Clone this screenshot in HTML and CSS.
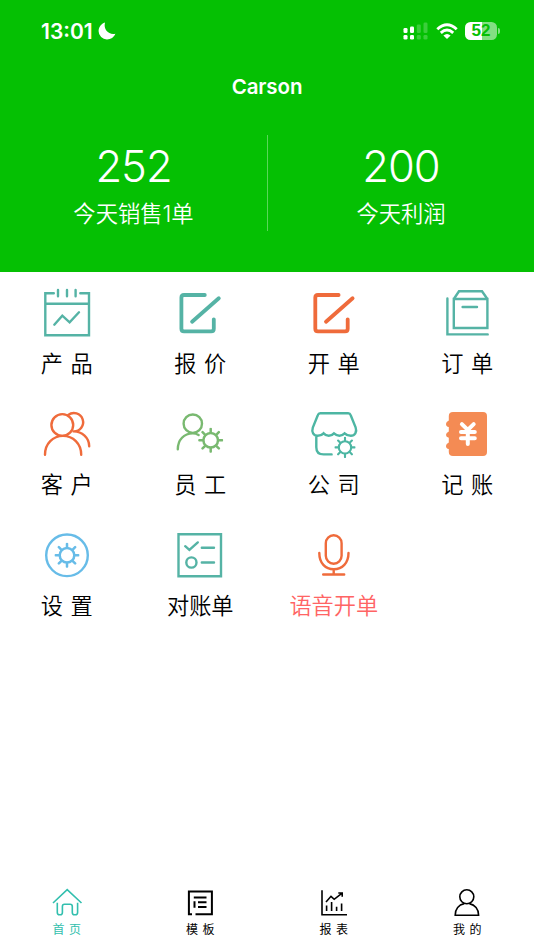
FILE: index.html
```html
<!DOCTYPE html>
<html lang="zh-CN">
<head>
<meta charset="utf-8">
<meta name="viewport" content="width=device-width, initial-scale=1">
<title>Carson</title>
<link rel="stylesheet" href="styles.css">
</head>
<body>
<svg width="0" height="0" class="defs" aria-hidden="true">
  <symbol id="gear" viewBox="-12 -12 24 24">
    <circle r="7"/>
    <path d="M0-7.5V-11M0 7.5V11M-7.5 0H-11M7.5 0H11M-5.3-5.3-7.8-7.8M5.3-5.3 7.8-7.8M-5.3 5.3-7.8 7.8M5.3 5.3 7.8 7.8"/>
  </symbol>
</svg>
<div class="app">
  <header class="header">
    <div class="status">
      <div class="clock"><span>13:01</span>
        <svg class="moon" viewBox="0 0 18 18"><path d="M7 .6C3.2 1.8.6 5.2.6 9.2A8.3 8.3 0 0 0 9 17.4C12.8 17.4 16 15.2 17.4 11.7C11.6 13.4 5 8.2 7 .6Z"/></svg>
      </div>
      <div class="signals">
        <svg class="cell" viewBox="0 0 26 18"><g><rect x=".5" y="6" width="4" height="5" rx="1.3"/><rect x="7" y="4.5" width="4" height="6.5" rx="1.3"/><rect x=".5" y="13" width="4" height="4.5" rx="1.3"/><rect x="7" y="13" width="4" height="4.5" rx="1.3"/></g><g opacity=".22"><rect x="13.8" y="2.5" width="4" height="8.5" rx="1.3"/><rect x="20.5" y=".5" width="4" height="10.5" rx="1.3"/><rect x="13.8" y="13" width="4" height="4.5" rx="1.3"/><rect x="20.5" y="13" width="4" height="4.5" rx="1.3"/></g></svg>
        <svg class="wifi" viewBox="0 0 22 17"><g fill="none" stroke="#fff" stroke-width="2.9"><path d="M1.3 6.2Q11-2.9 20.7 6.2"/><path d="M4.8 9.9Q11 4.2 17.2 9.9"/></g><path d="M7.4 12.6Q11 9.6 14.6 12.6L11 16Z"/></svg>
        <div class="battery"><span>52</span></div><i class="nub"></i>
      </div>
    </div>
    <h1>Carson</h1>
    <div class="stats">
      <div class="stat"><strong>252</strong><span>今天销售<span class="count">1</span>单</span></div>
      <div class="stat"><strong>200</strong><span>今天利润</span></div>
    </div>
  </header>

  <main class="menu">
    <a class="item"><svg class="teal" viewBox="0 0 60 60"><path d="M16.8 10.3H8.3V52.3H52V10.3H43.3M8.3 20.7H52M21 7V13.3M30 7V13.3M38.6 7V13.3"/><path d="M17.3 41.7 25.3 32.7 32.6 39.3 42 29.3"/></svg><span>产 品</span></a>
    <a class="item"><svg class="teal thick" viewBox="0 0 60 60"><path d="M34.8 12H14Q11.4 12 11.4 14.6V45.8Q11.4 48.4 14 48.4H41.2Q43.8 48.4 43.8 45.8V36.3M22.1 38.7 48.8 15.3"/></svg><span>报 价</span></a>
    <a class="item"><svg class="orange thick" viewBox="0 0 60 60"><path d="M34.6 12H13.9Q11.3 12 11.3 14.6V45.8Q11.3 48.4 13.9 48.4H41.1Q43.7 48.4 43.7 45.8V36.3M22 38.7 48.6 15.3"/></svg><span>开 单</span></a>
    <a class="item"><svg class="teal" viewBox="0 0 60 60"><path d="M10.4 15.5V51.4H50.7M16.8 16H50.4V45H16.8ZL22 8.3H45L50.4 16M25.6 24H40"/></svg><span>订 单</span></a>

    <a class="item"><svg class="orange" viewBox="0 0 60 60"><circle cx="25.3" cy="21" r="10.9"/><path d="M8 50.7C8 39.5 16 31.9 26 31.9S44.2 39.5 44.2 50.7M31.2 11A9.2 9.2 0 1 1 36.6 27.4M36.6 27.4C45 27.4 52.2 33.8 52.2 42.3"/></svg><span>客 户</span></a>
    <a class="item"><svg class="green" viewBox="0 0 60 60"><circle cx="22.8" cy="19.7" r="9.2"/><path d="M7.8 45.3C7.8 35.7 14 29.4 22.8 29.4Q26 29.4 28.6 31"/><use href="#gear" x="28.2" y="23.8" width="25" height="25"/></svg><span>员 工</span></a>
    <a class="item"><svg class="mint" viewBox="0 0 60 60"><path d="M16.3 9.3H44.2Q46 9.3 46.7 11.2L51.6 23.4C53.3 28 50.8 31.8 46.8 31.8Q43 31.8 40.6 29.4Q38.2 31.8 35.4 31.8T30 29.4Q27.8 31.8 24.8 31.8T19.6 29.4Q17.4 31.8 13.7 31.8C9.4 31.8 7.4 28 8.8 23.6L13.8 11.2Q14.5 9.3 16.3 9.3ZM12.3 32V43.2Q12.3 50.4 19.6 50.4H27.6"/><use href="#gear" x="30.4" y="32.8" width="21.2" height="21.2"/></svg><span>公 司</span></a>
    <a class="item"><svg class="ledger" viewBox="0 0 60 60"><path class="cover" d="M16 8H46Q50 8 50 12V48Q50 52 46 52H16Q11.8 52 11.8 48V45Q9 44.5 9 42T11.8 38.5V33.8Q9 33.3 9 31T11.8 27.5V23Q9 22.5 9 20T11.8 16.5V12Q11.8 8 16 8Z"/><path d="M24.9 20.1 30.8 26 36.7 20.1M30.8 26V40M24 27.9H37.8M24 34.3H37.8"/></svg><span>记 账</span></a>

    <a class="item"><svg class="blue" viewBox="0 0 60 60"><circle cx="30" cy="30.3" r="20.8"/><use href="#gear" x="17.5" y="17.8" width="25" height="25"/></svg><span>设 置</span></a>
    <a class="item"><svg class="teal" viewBox="0 0 60 60"><path d="M8.5 9.3H51V51.3H8.5ZM15.2 21.2 19.4 24.8 27.8 17.4M31.8 22.7H44M31.8 37.5H44"/><circle cx="21.4" cy="37.5" r="5.1"/></svg><span>对账单</span></a>
    <a class="item voice"><svg class="orange" viewBox="0 0 60 60"><rect x="21.8" y="10.3" width="15.8" height="28.4" rx="7.9"/><path d="M15.3 28C15.3 38 21.3 44.3 29.8 44.3S44.5 38 44.5 28M29.7 44.3V49.5M19.2 49.5H40.2"/></svg><span>语音开单</span></a>
  </main>

  <nav class="tabs">
    <a class="tab active"><svg viewBox="0 0 32 32"><path d="M2 16 16.2 2.6 30.5 16M6.3 15.8V25.5Q6.3 27.8 8.6 27.8H9.2Q11.4 27.8 11.4 25.5V19.4Q11.4 17.3 13.5 17.3H19.1Q21.3 17.3 21.3 19.4V25.5Q21.3 27.8 23.5 27.8H24.3Q26.6 27.8 26.6 25.5V15.8"/></svg><span>首 页</span></a>
    <a class="tab"><svg class="bold" viewBox="0 0 32 32"><path d="M8 27.2H4.9V4.4H27.9V27.2H11.5M9.8 10.4H22.5M14 15.2H22.5M14 20H22.5M10.5 14.2V20.8"/></svg><span>模 板</span></a>
    <a class="tab"><svg viewBox="0 0 32 32"><path d="M4 3.3V27.7H29M8.6 18.5V24M13.6 15V24M18.6 19.7V24M23.6 16.5V24M8 15 13 9.3 16.2 12.3 23.8 6.3M20.3 6H24.2V9.8"/></svg><span>报 表</span></a>
    <a class="tab"><svg viewBox="0 0 32 32"><circle cx="15.8" cy="9.8" r="7"/><path d="M13.2 16.6C7.8 17.8 4.2 22.2 4.2 28.2H27.6C27.6 22.2 23.9 17.8 18.4 16.6"/></svg><span>我 的</span></a>
  </nav>
</div>
</body>
</html>
```

FILE: styles.css
```css
* { box-sizing: border-box; }
body {
  margin: 0;
  background: #fff;
  color: #000;
  font-family: Inter, "Noto Sans CJK SC", sans-serif;
}
.defs { position: absolute; }
.app { display: flex; flex-direction: column; height: 950px; }

.header { height: 272px; background: #05c003; color: #fff; }
.status {
  display: flex;
  justify-content: space-between;
  height: 60px;
  padding: 2px 34px 0 41px;
}
.clock { display: flex; align-items: center; gap: 5px; font-size: 21px; font-weight: 600; }
.moon { width: 18px; height: 18px; fill: #fff; }
.signals { display: flex; align-items: center; }
.cell { width: 26px; height: 18px; fill: #fff; }
.wifi { width: 22px; height: 17px; margin-left: 7px; fill: #fff; }
.battery {
  width: 32px;
  height: 18px;
  margin-left: 7px;
  border-radius: 5.5px;
  background: linear-gradient(90deg, #fff 52%, #83df82 52%);
  color: #05c003;
  font-family: "Liberation Sans", sans-serif;
  font-size: 17px;
  font-weight: 700;
  line-height: 18px;
  text-align: center;
}
.nub { width: 2px; height: 6px; margin-left: 1px; border-radius: 0 2px 2px 0; background: #83df82; }

h1 { margin: 0; font-size: 20.5px; font-weight: 600; line-height: 54px; letter-spacing: -0.1px; text-align: center; }
.stats { display: grid; grid-template-columns: 1fr 1fr; height: 95px; margin-top: 21px; }
.stat { display: flex; flex-direction: column; align-items: center; font-weight: 350; }
.stat + .stat { border-left: 1px solid #5ad759; }
.stat strong { font-size: 43.5px; font-weight: 340; line-height: 62px; letter-spacing: -1px; }
.stat > span { font-size: 22.3px; line-height: 34px; white-space: nowrap; }

.menu {
  display: grid;
  flex: 1;
  grid-template-columns: repeat(4, 1fr);
  grid-auto-rows: 121px;
}
.item {
  display: flex;
  flex-direction: column;
  align-items: center;
  padding-top: 11px;
  font-size: 22.2px;
  font-weight: 350;
  line-height: 34px;
  word-spacing: 1.5px;
  white-space: nowrap;
}
.item svg {
  width: 60px;
  height: 60px;
  margin-bottom: 4px;
  fill: none;
  stroke: currentColor;
  stroke-width: 2.4;
  stroke-linecap: round;
}
.item .thick { stroke-width: 3.8; }
.teal { color: #55b3a5; }
.mint { color: #4db6a3; }
.orange { color: #ef6b3b; }
.green { color: #79b970; }
.blue { color: #67bce8; }
.item .ledger { stroke: #fff; stroke-width: 4; }
.ledger .cover { fill: #f48b54; stroke: none; }
.voice { color: #ff6464; }

.tabs { display: grid; grid-template-columns: repeat(4, 1fr); height: 63px; }
.tab {
  display: flex;
  flex-direction: column;
  align-items: center;
  font-size: 12px;
  line-height: 21px;
  word-spacing: 1px;
}
.tab svg { width: 32px; height: 32px; fill: none; stroke: currentColor; stroke-width: 1.6; }
.tab .bold { stroke-width: 2; }
.active { color: #32bfae; }
```
